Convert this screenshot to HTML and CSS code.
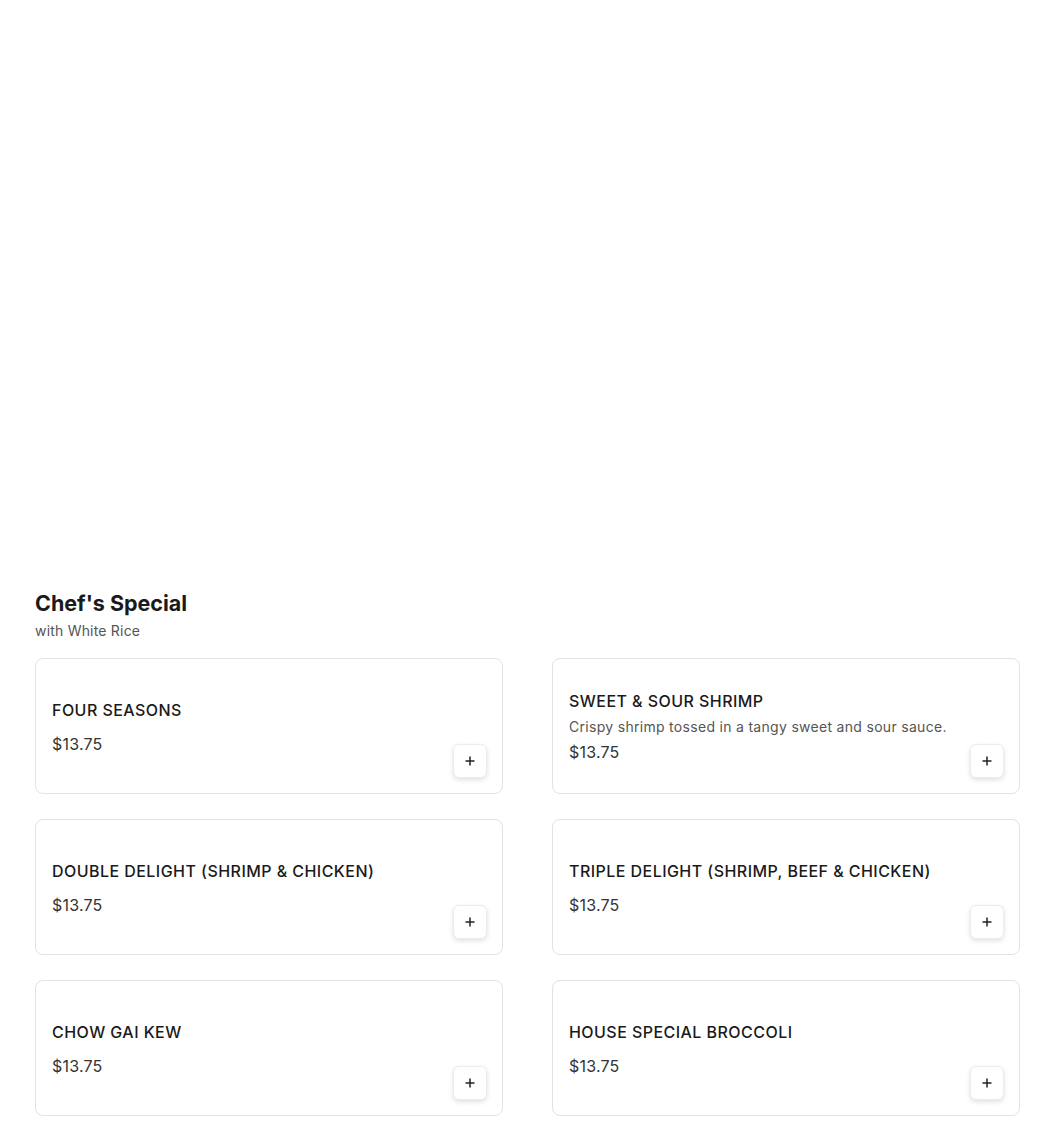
FILE: index.html
```html
<!DOCTYPE html>
<html>
<head><meta charset="utf-8"><link rel="stylesheet" href="styles.css"></head>
<body>
<div class="hero"></div>
<section class="menu">
  <h2 class="cat-title">Chef's Special</h2>
  <p class="cat-sub">with White Rice</p>
  <div class="grid">
    <div class="card"><div class="info"><div class="name">FOUR SEASONS</div><div class="price">$13.75</div></div><button class="add" aria-label="Add"><svg width="12" height="12" viewBox="0 0 12 12"><path d="M6 1.5v9M1.5 6h9" stroke="#222" stroke-width="1.5"/></svg></button></div>
    <div class="card"><div class="info"><div class="name">SWEET &amp; SOUR SHRIMP</div><div class="desc">Crispy shrimp tossed in a tangy sweet and sour sauce.</div><div class="price">$13.75</div></div><button class="add" aria-label="Add"><svg width="12" height="12" viewBox="0 0 12 12"><path d="M6 1.5v9M1.5 6h9" stroke="#222" stroke-width="1.5"/></svg></button></div>
    <div class="card"><div class="info"><div class="name">DOUBLE DELIGHT (SHRIMP &amp; CHICKEN)</div><div class="price">$13.75</div></div><button class="add" aria-label="Add"><svg width="12" height="12" viewBox="0 0 12 12"><path d="M6 1.5v9M1.5 6h9" stroke="#222" stroke-width="1.5"/></svg></button></div>
    <div class="card"><div class="info"><div class="name">TRIPLE DELIGHT (SHRIMP, BEEF &amp; CHICKEN)</div><div class="price">$13.75</div></div><button class="add" aria-label="Add"><svg width="12" height="12" viewBox="0 0 12 12"><path d="M6 1.5v9M1.5 6h9" stroke="#222" stroke-width="1.5"/></svg></button></div>
    <div class="card"><div class="info"><div class="name">CHOW GAI KEW</div><div class="price">$13.75</div></div><button class="add" aria-label="Add"><svg width="12" height="12" viewBox="0 0 12 12"><path d="M6 1.5v9M1.5 6h9" stroke="#222" stroke-width="1.5"/></svg></button></div>
    <div class="card"><div class="info"><div class="name">HOUSE SPECIAL BROCCOLI</div><div class="price">$13.75</div></div><button class="add" aria-label="Add"><svg width="12" height="12" viewBox="0 0 12 12"><path d="M6 1.5v9M1.5 6h9" stroke="#222" stroke-width="1.5"/></svg></button></div>
  </div>
</section>
</body>
</html>
```
FILE: styles.css
```css
body { margin: 0; background: #fff; font-family: Inter, "Open Sans", sans-serif; color: #1a1a1a; }
.hero { height: 585px; }
.menu { padding: 3px 29px 0 35px; }
.cat-title { margin: 0; font-size: 21.5px; font-weight: 700; line-height: 30px; color: #1a1a1a; }
.cat-sub { margin: 3px 0 17px; font-size: 14px; line-height: 20px; color: #555; letter-spacing: 0.2px; }
.grid { display: grid; grid-template-columns: 468px 468px; column-gap: 49px; row-gap: 25px; }
.card { border: 1px solid #e2e2e2; border-radius: 8px; height: 136px; box-sizing: border-box; padding: 15px; display: flex; }
.info { flex: 1; align-self: center; padding-left: 1px; padding-top: 1px; }
.name { font-size: 16px; font-weight: 500; line-height: 24px; letter-spacing: 0.45px; margin-bottom: 4px; color: #1a1a1a; }
.desc { font-size: 14px; line-height: 20px; color: #555; letter-spacing: 0.3px; margin-bottom: -7px; }
.price { font-size: 16px; line-height: 24px; color: #333; margin-top: 10px; letter-spacing: 0.2px; }
.add { align-self: flex-end; width: 34px; height: 34px; padding: 0; border: 1px solid #ececec; border-radius: 6px; background: #fff; box-shadow: 0 2px 5px rgba(0,0,0,.12); display: flex; align-items: center; justify-content: center; }
```
